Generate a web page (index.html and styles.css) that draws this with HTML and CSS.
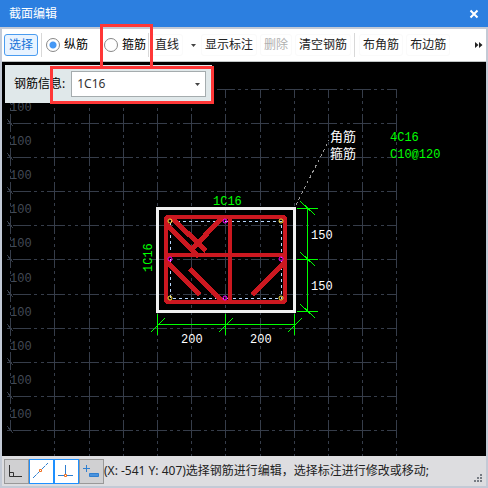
FILE: index.html
```
<!DOCTYPE html>
<html lang="zh-CN">
<head>
<meta charset="utf-8">
<title>截面编辑</title>
<link rel="stylesheet" href="styles.css">
</head>
<body>
<div class="window">
  <header class="titlebar">
    <h1>截面编辑</h1>
    <button class="close" type="button" aria-label="关闭"><svg width="10" height="10" viewBox="0 0 10 10"><path d="M1.5 1.5 8.5 8.5M8.5 1.5 1.5 8.5" stroke="#fff" stroke-width="2"/></svg></button>
  </header>
  <div class="toolbar">
    <button class="tool active" type="button">选择</button>
    <span class="sep"></span>
    <label class="option first"><input type="radio" name="bar" checked>纵筋</label>
    <label class="option"><input type="radio" name="bar">箍筋</label>
    <span class="sep"></span>
    <button class="tool" type="button">直线</button>
    <button class="drop" type="button" aria-label="直线选项"><svg width="5" height="3" viewBox="0 0 5 3"><path d="M0 0h5L2.500 3z" fill="#444"/></svg></button>
    <button class="tool" type="button">显示标注</button>
    <button class="tool" type="button" disabled>删除</button>
    <button class="tool" type="button">清空钢筋</button>
    <span class="sep wide"></span>
    <button class="tool" type="button">布角筋</button>
    <button class="tool" type="button">布边筋</button>
    <button class="more" type="button" aria-label="更多"><svg width="8" height="6" viewBox="0 0 8 6"><path d="M0 0v6l3.5-3zM4 0v6l3.5-3z" fill="#222"/></svg></button>
    <span class="mark mark-radio"></span>
  </div>
  <main class="canvas">
    <svg class="drawing" width="484" height="394" viewBox="2 62 484 394">
      <g class="grid">
        <path class="rows" d="M4 89.500H397M4 123.500H397M4 157.500H397M4 191.500H397M4 225.500H397M4 259.500H397M4 294.500H397M4 328.500H397M4 362.500H397M4 396.500H397M4 430.500H397"/>
        <path class="cols" d="M54.500 89V456M89.500 89V456M123.500 89V456M157.500 89V456M191.500 89V456M225.500 89V456M260.500 89V456M294.500 89V456M328.500 89V456M362.500 89V456M396.500 89V456M10.500 89V430"/>
        <path d="M7 119l6 7M7 153l6 7M7 187l6 7M7 221l6 7M7 255l6 7M7 290l6 7M7 324l6 7M7 358l6 7M7 392l6 7M7 426l6 7"/>
      </g>
      <g class="scale">
        <text x="10" y="111">100</text><text x="10" y="145">100</text><text x="10" y="179">100</text><text x="10" y="213">100</text><text x="10" y="247">100</text><text x="10" y="282">100</text><text x="10" y="316">100</text><text x="10" y="350">100</text><text x="10" y="384">100</text><text x="10" y="418">100</text>
      </g>
      <path class="leader" d="M296 205 329 140"/>
      <rect class="outline" x="157.500" y="208.500" width="137" height="103"/>
      <rect class="cover" x="170.500" y="221.500" width="111" height="77"/>
      <g class="bars">
        <rect x="166" y="217" width="119" height="85" rx="2"/>
        <path d="M166 255H285M230 217V302"/>
        <path class="hooks" d="M171 217 206 251M167 225 199 257M224 216 190 251M167 262 200 295M190 269 224 303M284 263 252 295"/>
      </g>
      <g class="side-bars"><circle cx="225" cy="221" r="2"/><circle cx="170" cy="259" r="2"/><circle cx="281" cy="259" r="2"/><circle cx="225" cy="298" r="2"/></g>
      <g class="corner-bars"><circle cx="170" cy="221" r="2"/><circle cx="281" cy="221" r="2"/><circle cx="170" cy="298" r="2"/><circle cx="281" cy="298" r="2"/></g>
      <path class="dims" d="M157 324.500H295M157.500 314V335M225.500 314V335M294.500 314V335M151 332l14-14M219 332l14-14M288 332l14-14M307.500 208V312M297 208.500H318M297 259.500H318M297 311.500H318M300 201l15 14M300 252l15 14M300 304l15 14"/>
      <g class="values">
        <text x="181" y="343">200</text><text x="250" y="343">200</text>
        <text x="311" y="239">150</text><text x="311" y="290">150</text>
        <text class="cjk" x="330" y="141">角筋</text><text class="cjk" x="330" y="158">箍筋</text>
      </g>
      <g class="specs">
        <text x="213" y="205">1C16</text>
        <text transform="translate(152 272) rotate(-90)">1C16</text>
        <text x="390" y="141">4C16</text><text x="390" y="158">C10@120</text>
      </g>
    </svg>
    <div class="panel">
      <label for="info">钢筋信息:</label>
      <span class="picker">
        <select id="info"><option>1C16</option></select>
        <svg width="5" height="3" viewBox="0 0 5 3"><path d="M0 0h5L2.500 3z" fill="#444"/></svg>
      </span>
      <span class="mark mark-info"></span>
    </div>
  </main>
  <footer class="status">
    <button class="snap" type="button" aria-label="正交"><svg width="23" height="23" viewBox="0 0 23 23"><path d="M4.500 5V16.500H17M4.500 12.500H8.500V16.500" stroke="#333"/></svg></button>
    <button class="snap on" type="button" aria-label="中点捕捉"><svg width="23" height="23" viewBox="0 0 23 23"><path d="M3 18 18 3" stroke="#2f7fd0" stroke-dasharray="5 1"/><path d="M9.500 9.500h2v2h-2z" stroke="#f07020" fill="#fff"/></svg></button>
    <button class="snap on" type="button" aria-label="垂足捕捉"><svg width="23" height="23" viewBox="0 0 23 23"><path d="M10.500 5V15M3 15.500H18" stroke="#2f7fd0"/><path d="M9.500 14.500h2v2h-2z" stroke="#f07020" fill="#fff"/></svg></button>
    <button class="snap" type="button" aria-label="动态输入"><svg width="23" height="23" viewBox="0 0 23 23"><path d="M3 8.500H10M6.500 5V12" stroke="#2f7fd0"/><path d="M9.500 13.500h9v3h-9z" stroke="#2f7fd0" fill="#4b93dd"/></svg></button>
    <output>(X: -541 Y: 407)选择钢筋进行编辑，选择标注进行修改或移动;</output>
    <svg class="grip" width="8" height="8" viewBox="0 0 8 8"><path d="M6 0h2v2H6zM3 3h2v2H3zM6 3h2v2H6zM0 6h2v2H0zM3 6h2v2H3zM6 6h2v2H6z" fill="#777c84"/></svg>
  </footer>
</div>
</body>
</html>
```
FILE: styles.css
```
* { box-sizing: border-box; }
body { margin: 0; color: #111; }
body, button, select {
  font-family: "Noto Sans", "Noto Sans CJK SC", sans-serif;
  font-size: 12px;
  line-height: 18px;
}
button { margin: 0; padding: 0; border: 0; background: none; color: inherit; }
svg { display: block; flex: none; fill: none; }

.window { display: flex; flex-direction: column; min-height: 100vh; background: #c3cad6; }
.titlebar {
  display: flex; align-items: center; justify-content: space-between;
  height: 27px; padding: 0 9px; background: #2c7fe0; color: #fff;
}
.titlebar h1 { margin: 0; font-size: 12px; font-weight: 400; }

.toolbar {
  position: relative; display: flex; align-items: center; gap: 3px;
  height: 33px; margin: 2px 2px 0; padding: 0 3px 0 2px;
  background: #fff; border-bottom: 1px solid #c0c5c5; white-space: nowrap;
}
.tool { height: 22px; padding: 0 3px; border: 1px solid #fafafa; border-radius: 3px; color: #222; }
.tool.active { padding: 0 4px; border-color: #4a9cf0; background: #e8f3ff; color: #1674d8; }
.tool:disabled { color: #b0b0b0; }
.sep { width: 1px; height: 24px; margin-right: -1px; background: #d8d8d8; }
.sep.wide { margin-right: 1px; }
.option { display: flex; align-items: center; gap: 4px; margin-right: 13px; color: #000; }
.option.first { margin-left: 2px; }
.option + .sep { margin-left: -14px; }
.option input {
  appearance: none; width: 14px; height: 14px; margin: 0;
  border: 1px solid #888; border-radius: 50%; background: #fff;
}
.option input:checked { background: radial-gradient(circle, #4598f5 3px, #fff 4px); }
.drop { padding: 4px 2px 4px 5px; }
.more { margin-left: auto; }

.mark { position: absolute; border: 3px solid #ff3737; pointer-events: none; }
.mark-radio { left: 98px; top: -5px; width: 53px; height: 45px; z-index: 2; }
.mark-info { left: 45px; top: 1px; width: 164px; height: 38px; }

.canvas { position: relative; flex: 1; margin: 0 2px; background: #000; overflow: hidden; }
.panel {
  position: absolute; left: 3px; top: 3px; display: flex; align-items: center; gap: 6px;
  height: 38px; padding: 0 6px 0 9px; background: #e0e8ea; color: #000; white-space: nowrap;
}
.picker { display: flex; align-items: center; }
.picker select {
  appearance: none; width: 135px; height: 26px; padding: 0 5px;
  border: 1px solid #a5acae; border-radius: 0; background: #fff; color: #333;
}
.picker svg { margin-left: -11px; margin-right: 6px; pointer-events: none; }

.drawing { font-family: "Liberation Mono", "Noto Sans CJK SC", monospace; font-size: 12px; }
.grid, .leader, .outline, .bars, .cover, .dims { shape-rendering: crispEdges; }
.grid { stroke: #363d4a; }
.rows { stroke-dasharray: 18 3 3 4 3 3; stroke-dashoffset: 25; }
.cols { stroke-dasharray: 18 3 3 4 3 3; stroke-dashoffset: 9; }
.scale { fill: #434a56; }
.leader { stroke: #999; stroke-dasharray: 3 3; }
.outline { stroke: #f0f0f0; stroke-width: 3; }
.bars { stroke: #cc1820; stroke-width: 4; }
.hooks { stroke-width: 5; }
.cover { stroke: #b8d8ff; stroke-dasharray: 3 3; }
.side-bars { stroke: #f0f; }
.corner-bars { stroke: #ffe040; }
.dims { stroke: #0f0; }
.values { fill: #fff; }
.cjk { font-size: 13px; }
.specs { fill: #0f0; }

.status {
  display: flex; align-items: center; height: 30px; margin: 0 2px 2px;
  padding: 0 4px 0 2px; background: #dddde0; color: #222; white-space: nowrap;
}
.snap { width: 25px; height: 25px; border: 1px solid #999; background: #d0d0d2; }
.snap.on { border-color: #1e90ff; background: #fff; }
.grip { margin-left: auto; align-self: flex-end; margin-bottom: 4px; }
```
